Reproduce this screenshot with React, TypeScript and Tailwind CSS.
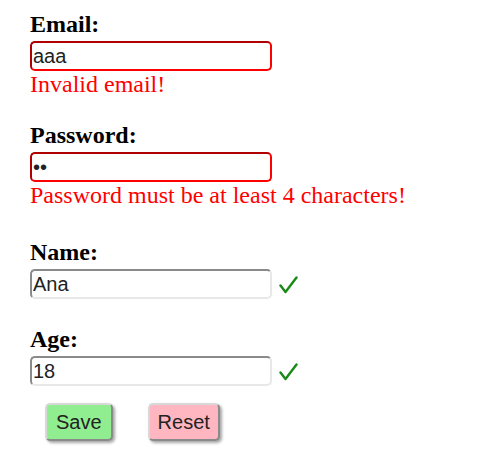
import { useState } from 'react';

interface Field {
  label: string;
  type: string;
  value: string;
  error?: string;
  gap: string;
}

const FIELDS: Field[] = [
  { label: 'Email:', type: 'text', value: 'aaa', error: 'Invalid email!', gap: '' },
  { label: 'Password:', type: 'password', value: 'ab', error: 'Password must be at least 4 characters!', gap: 'mt-[24px]' },
  { label: 'Name:', type: 'text', value: 'Ana', gap: 'mt-[30px]' },
  { label: 'Age:', type: 'text', value: '18', gap: 'mt-[27px]' },
];

export default function App() {
  const [values, setValues] = useState(FIELDS.map((f) => f.value));

  return (
    <div className="min-h-[470px] bg-white pl-[30px] pt-[11px] font-['Liberation_Serif',serif] text-black">
      {FIELDS.map((field, i) => (
        <div key={field.label} className={field.gap}>
          <div className="text-[24px] leading-[27px] font-bold">{field.label}</div>
          <div className="mt-[3px] flex items-center gap-[7px]">
            <input
              type={field.type}
              value={values[i]}
              onChange={(e) => setValues(values.map((v, j) => (j === i ? e.target.value : v)))}
              className={`h-[30px] w-[242px] rounded-[5px] border-2 border-solid px-[1px] font-['Liberation_Sans',Arial,sans-serif] text-[20px] text-[#222] outline-none ${
                field.error
                  ? 'border-t-[#b00000] border-l-[#b00000] border-r-[#ff0000] border-b-[#ff0000]'
                  : 'border-t-[#8a8a8a] border-l-[#8a8a8a] border-r-[#e8e8e8] border-b-[#e8e8e8]'
              }`}
            />
            {!field.error && (
              <svg width="19" height="18" viewBox="0 0 19 18" className="mt-[2px]">
                <path d="M1.5 9.5 L6.5 16 L17.5 1.5" fill="none" stroke="#178a17" strokeWidth="2.4" strokeLinecap="round" strokeLinejoin="round" />
              </svg>
            )}
          </div>
          {field.error && (
            <div className="text-[24px] leading-[27px] text-[#ff0000]">{field.error}</div>
          )}
        </div>
      ))}

      <div className="mt-[17px] flex gap-[35px] pl-[15px]">
        <button className="h-[38px] rounded-[5px] border-2 border-solid border-t-[#d8d8d8] border-l-[#d8d8d8] border-r-[#8a8a8a] border-b-[#8a8a8a] bg-[#90ee90] px-[9px] font-['Liberation_Sans',Arial,sans-serif] text-[20px] text-[#222] shadow-[2px_2px_3px_rgba(0,0,0,0.35)]">
          Save
        </button>
        <button className="h-[38px] rounded-[5px] border-2 border-solid border-t-[#d8d8d8] border-l-[#d8d8d8] border-r-[#8a8a8a] border-b-[#8a8a8a] bg-[#ffb6c1] px-[8px] font-['Liberation_Sans',Arial,sans-serif] text-[20px] text-[#222] shadow-[2px_2px_3px_rgba(0,0,0,0.35)]">
          Reset
        </button>
      </div>
    </div>
  );
}
